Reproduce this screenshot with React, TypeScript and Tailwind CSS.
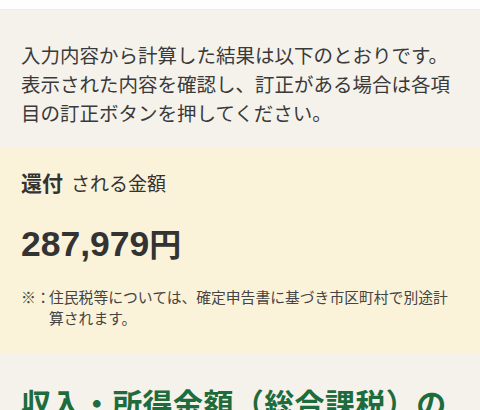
export default function App() {
  return (
    <div className="w-[480px] h-[410px] overflow-hidden bg-[#f5f2ec] text-[#333] font-['Noto_Sans_CJK_JP',sans-serif]">
      <div className="h-[10px] bg-[#fefefe] border-b border-[#efebe6]" />
      <section className="px-[21px] pt-[30px] pb-[20px]">
        <p className="text-[19.5px] leading-[29px] text-[#3a3a3a]">
          入力内容から計算した結果は以下のとおりです。表示された内容を確認し、訂正がある場合は各項目の訂正ボタンを押してください。
        </p>
      </section>
      <section className="bg-[#faf2d9] px-[21px] pt-[20px] pb-[25px]">
        <h2 className="flex items-baseline gap-[8px] leading-[30px] text-[#333]">
          <span className="text-[21px] font-bold">還付</span>
          <span className="text-[19px]">される金額</span>
        </h2>
        <div className="mt-[24px] flex items-baseline font-bold leading-[40px] text-[#333]">
          <span className="text-[35.5px] font-['Liberation_Sans',sans-serif]">287,979</span>
          <span className="text-[32px]">円</span>
        </div>
        <div className="mt-[22px] flex text-[14.8px] leading-[21px] text-[#444]">
          <span className="w-[28px] shrink-0">※：</span>
          <p>住民税等については、確定申告書に基づき市区町村で別途計算されます。</p>
        </div>
      </section>
      <section className="px-[21px] pt-[29px]">
        <h1 className="text-[30px] font-bold leading-[40px] tracking-[0.4px] text-[#1e6b3b]">
          収入・所得金額（総合課税）の
        </h1>
      </section>
    </div>
  )
}
